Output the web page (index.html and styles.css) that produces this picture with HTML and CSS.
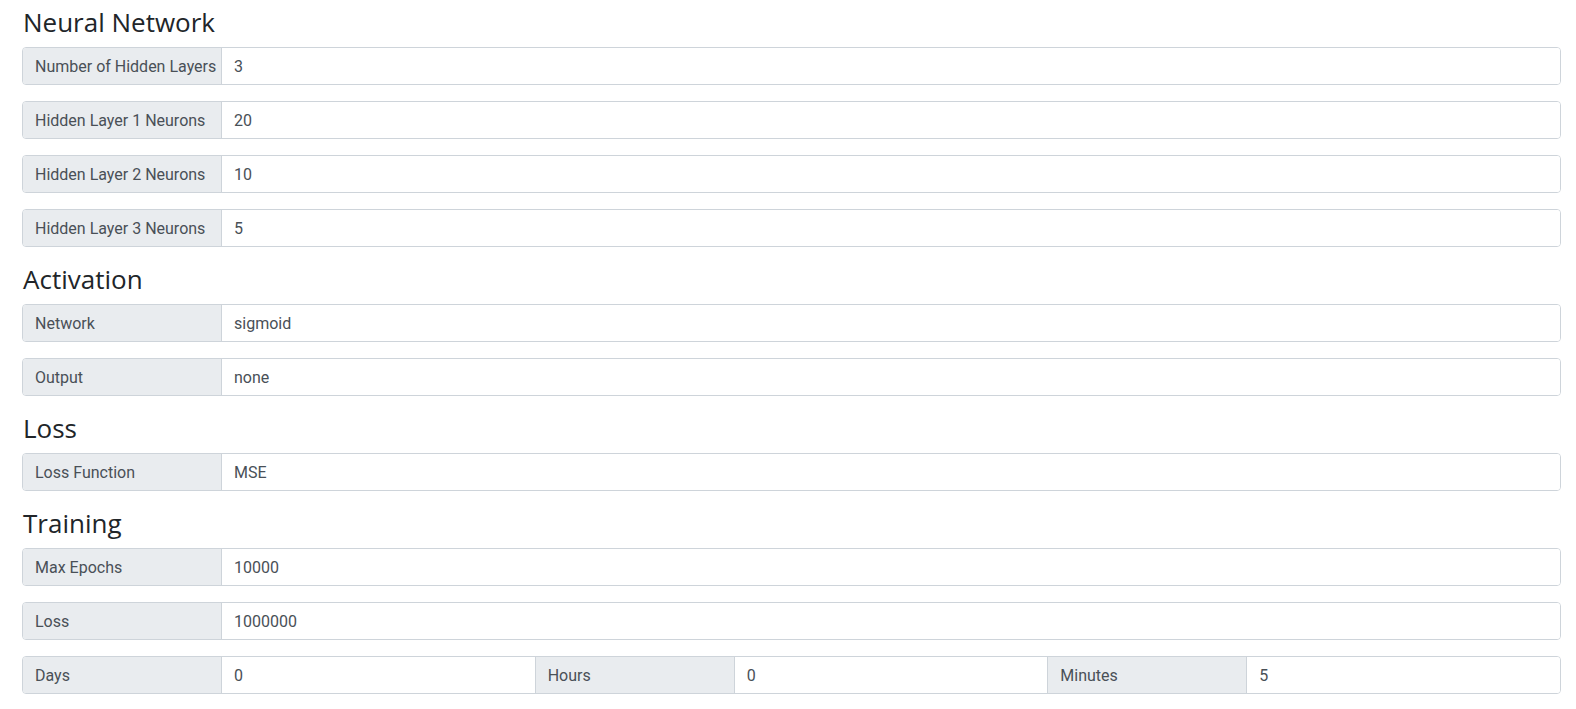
FILE: index.html
```html
<!DOCTYPE html>
<html>
<head>
<meta charset="utf-8">
<link rel="stylesheet" href="styles.css">
</head>
<body>
<div class="page">
  <h4 class="section-title">Neural Network</h4>
  <div class="group"><span class="label">Number of Hidden Layers</span><span class="value">3</span></div>
  <div class="group"><span class="label">Hidden Layer 1 Neurons</span><span class="value">20</span></div>
  <div class="group"><span class="label">Hidden Layer 2 Neurons</span><span class="value">10</span></div>
  <div class="group"><span class="label">Hidden Layer 3 Neurons</span><span class="value">5</span></div>

  <h4 class="section-title">Activation</h4>
  <div class="group"><span class="label">Network</span><span class="value">sigmoid</span></div>
  <div class="group"><span class="label">Output</span><span class="value">none</span></div>

  <h4 class="section-title">Loss</h4>
  <div class="group"><span class="label">Loss Function</span><span class="value">MSE</span></div>

  <h4 class="section-title">Training</h4>
  <div class="group"><span class="label">Max Epochs</span><span class="value">10000</span></div>
  <div class="group"><span class="label">Loss</span><span class="value">1000000</span></div>
  <div class="group"><span class="label">Days</span><span class="value">0</span><span class="label mid">Hours</span><span class="value">0</span><span class="label mid">Minutes</span><span class="value">5</span></div>
</div>
</body>
</html>
```

FILE: styles.css
```css
html, body {
  margin: 0;
  padding: 0;
  background: #ffffff;
}

.page {
  padding: 6px 15px 0 22px;
}

.section-title {
  margin: 0 0 8px 0;
  font-family: "Open Sans", "Noto Sans", sans-serif;
  font-weight: 500;
  font-size: 26px;
  line-height: 33px;
  color: #212529;
  padding-left: 1px;
}

.group {
  display: flex;
  height: 38px;
  margin-bottom: 16px;
  border: 1px solid #ced4da;
  border-radius: 4px;
  box-sizing: border-box;
  overflow: hidden;
  font-family: Roboto, "Liberation Sans", sans-serif;
  font-size: 16px;
  color: #495057;
}

.label {
  flex: 0 0 199px;
  box-sizing: border-box;
  display: flex;
  align-items: center;
  padding-left: 12px;
  background: #e9ecef;
  border-right: 1px solid #ced4da;
  white-space: nowrap;
}

.label.mid {
  border-left: 1px solid #ced4da;
  flex-basis: 200px;
}

.value {
  flex: 1 1 0;
  display: flex;
  align-items: center;
  padding-left: 12px;
  background: #ffffff;
}
```
